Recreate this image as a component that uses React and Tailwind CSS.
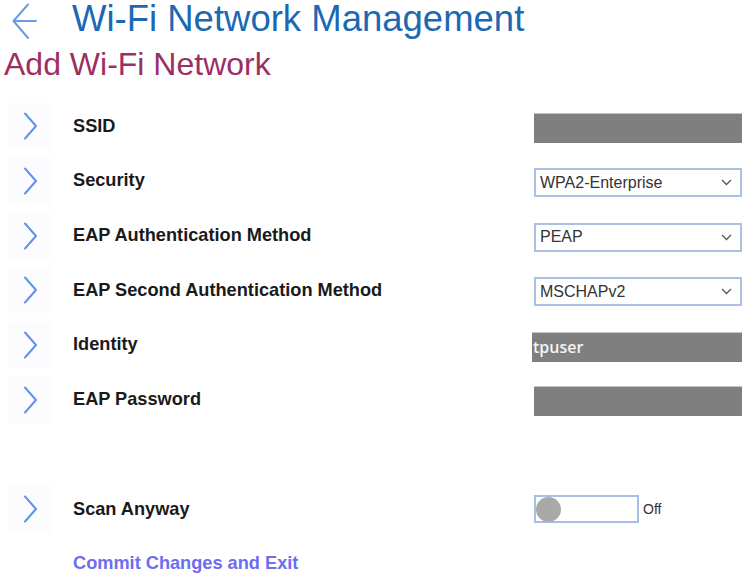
import React from 'react'

const rows = [
  { label: 'SSID', kind: 'blank' },
  { label: 'Security', kind: 'select', value: 'WPA2-Enterprise' },
  { label: 'EAP Authentication Method', kind: 'select', value: 'PEAP' },
  { label: 'EAP Second Authentication Method', kind: 'select', value: 'MSCHAPv2' },
  { label: 'Identity', kind: 'text', value: 'tpuser' },
  { label: 'EAP Password', kind: 'blank' },
]

function Chevron() {
  return (
    <div className="w-[44px] h-[46px] ml-[8px] bg-[#fcfcfe] flex items-center justify-center shrink-0">
      <svg width="15" height="28" viewBox="0 0 15 28" fill="none">
        <path d="M2 1.5 L13 14 L2 26.5" stroke="#5f93ea" strokeWidth="2" strokeLinecap="round" strokeLinejoin="round" />
      </svg>
    </div>
  )
}

function Control({ row }) {
  if (row.kind === 'select') {
    return (
      <div className="w-[208px] h-[29px] border-2 border-[#a9c1e3] flex items-center justify-between pl-[4px] pr-[8px] text-[16px] text-[#333]">
        <span>{row.value}</span>
        <svg width="11" height="7" viewBox="0 0 11 7" fill="none">
          <path d="M1 1 L5.5 5.5 L10 1" stroke="#555" strokeWidth="1.3" />
        </svg>
      </div>
    )
  }
  if (row.kind === 'text') {
    return (
      <div className="w-[210px] -ml-[2px] h-[30px] bg-[#7f7f7f] border-t border-[#c4c4c4] flex items-center pl-[1px] text-[16px] font-semibold text-[#f4f4f4] font-['Open_Sans',sans-serif]">
        {row.value}
      </div>
    )
  }
  return <div className="w-[208px] h-[30px] bg-[#7f7f7f] border-t border-[#c4c4c4]" />
}

export default function App() {
  return (
    <div className="w-[755px] h-[586px] bg-white font-['Liberation_Sans',Arial,sans-serif] overflow-hidden">
      {/* header */}
      <div className="flex h-[42px]">
        <div className="w-[72px] pl-[12px] pt-[3px]">
          <svg width="25" height="37" viewBox="0 0 25 37" fill="none">
            <path d="M24 18 H2 M16 1.5 L1.5 18 L16 35" stroke="#6a9be8" strokeWidth="2" strokeLinecap="round" strokeLinejoin="round" />
          </svg>
        </div>
        <h1 className="text-[36.5px] leading-[38px] text-[#1b68b3]">Wi-Fi Network Management</h1>
      </div>
      <h2 className="text-[32px] leading-none text-[#9c2f62] pl-[4px] mt-[6px]">Add Wi-Fi Network</h2>

      <div className="mt-[19px]">
        {rows.map(function (r) {
          return (
            <div key={r.label} className="h-[54.7px] flex items-center">
              <Chevron />
              <div className="w-[482px] pl-[21px] text-[18.2px] font-bold text-[#1a1a1a]">{r.label}</div>
              <div className="pt-[3px]"><Control row={r} /></div>
            </div>
          )
        })}
        <div className="h-[54.7px]" />
        <div className="h-[54.7px] flex items-center">
          <Chevron />
          <div className="w-[482px] pl-[21px] text-[18.2px] font-bold text-[#1a1a1a]">Scan Anyway</div>
          <div className="flex items-center gap-[4px]">
            <div className="w-[105px] h-[28px] border-2 border-[#a6bfe2] flex items-center">
              <div className="w-[25px] h-[25px] rounded-full bg-[#a9a9a9]" />
            </div>
            <span className="text-[14px] text-[#333]">Off</span>
          </div>
        </div>
        <div className="h-[54.7px] flex items-center pl-[73px]">
          <button className="text-[18.2px] font-bold text-[#6d6df2]">Commit Changes and Exit</button>
        </div>
      </div>
    </div>
  )
}
